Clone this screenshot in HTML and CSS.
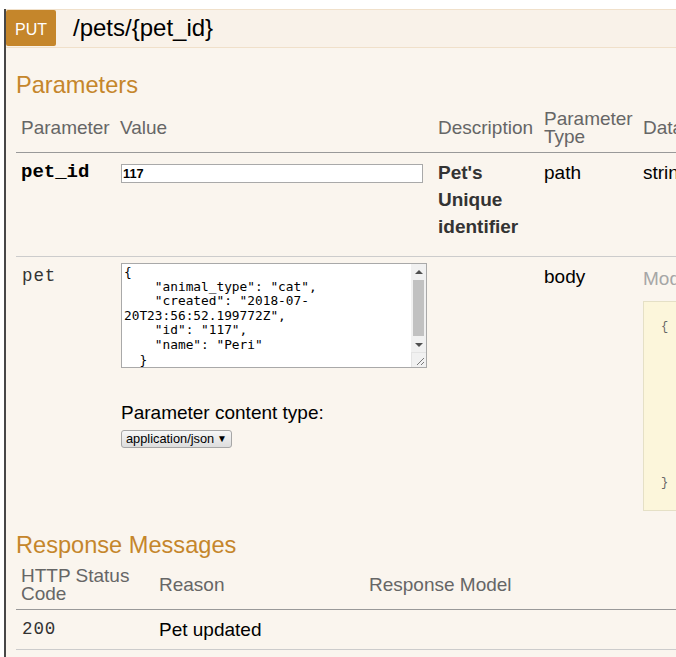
FILE: index.html
```html
<!DOCTYPE html>
<html lang="en">
<head>
<meta charset="utf-8">
<title>PUT /pets/{pet_id}</title>
<link rel="stylesheet" href="styles.css">
</head>
<body>
<div class="op">
  <div class="heading">
    <span class="method">PUT</span>
    <span class="path">/pets/{pet_id}</span>
  </div>
  <div class="content">
    <h4 class="section-title params-title">Parameters</h4>
    <table class="grid params">
      <colgroup>
        <col class="c-param">
        <col class="c-value">
        <col class="c-desc">
        <col class="c-ptype">
        <col class="c-dtype">
      </colgroup>
      <thead>
        <tr>
          <th>Parameter</th>
          <th class="th-value">Value</th>
          <th>Description</th>
          <th>Parameter Type</th>
          <th>Data Type</th>
        </tr>
      </thead>
      <tbody>
        <tr class="sep">
          <td class="code required">pet_id</td>
          <td><input class="text-input" type="text" value="117"></td>
          <td class="desc"><p><strong>Pet's Unique identifier</strong></p></td>
          <td>path</td>
          <td>string</td>
        </tr>
        <tr>
          <td class="code plain">pet</td>
          <td>
            <div class="textarea-wrap">
              <textarea class="body-textarea">{
    "animal_type": "cat",
    "created": "2018-07-20T23:56:52.199772Z",
    "id": "117",
    "name": "Peri"
  }</textarea>
              <div class="fake-scrollbar" aria-hidden="true">
                <div class="sb-button"><span class="arrow-up"></span></div>
                <div class="sb-track"><div class="sb-thumb"></div></div>
                <div class="sb-button"><span class="arrow-down"></span></div>
                <div class="sb-resizer">
                  <svg width="15" height="15" viewBox="0 0 15 15"><path d="M13 6 L6 13 M13 10 L10 13" stroke="#7a7a7a" stroke-width="1" fill="none"/></svg>
                </div>
              </div>
            </div>
            <div class="content-type">
              <label class="ct-label">Parameter content type:</label>
              <span class="select-wrap"><select class="ct-select"><option>application/json</option></select></span>
            </div>
          </td>
          <td></td>
          <td>body</td>
          <td>
            <div class="signature-nav"><span class="nav-link">Model</span> <span class="nav-link selected">Example Value</span></div>
            <pre class="snippet">{
      "animal_type": "string",
      "created": "2018-07-20T23:56:52.199Z",
      "id": "string",
      "name": "string",
      "tags": {
        "additionalProp1": "string",
        "additionalProp2": "string",
        "additionalProp3": "string"
      }
}</pre>
          </td>
        </tr>
      </tbody>
    </table>
    <h4 class="section-title resp-title">Response Messages</h4>
    <table class="grid responses">
      <colgroup>
        <col class="c-code">
        <col class="c-reason">
        <col class="c-model">
      </colgroup>
      <thead>
        <tr>
          <th>HTTP Status Code</th>
          <th>Reason</th>
          <th>Response Model</th>
        </tr>
      </thead>
      <tbody>
        <tr class="sep">
          <td class="code plain">200</td>
          <td>Pet updated</td>
          <td></td>
        </tr>
      </tbody>
    </table>
  </div>
</div>
</body>
</html>
```
FILE: styles.css
```css
* { box-sizing: border-box; }

html, body {
  margin: 0;
  padding: 0;
  background: #ffffff;
  overflow: hidden;
}

body {
  font-family: "Liberation Sans", Arial, sans-serif;
  width: 676px;
  height: 657px;
}

.op {
  margin: 9px 0 0 4px;
  border-left: 2px solid #474747;
  height: 648px;
  overflow: hidden;
  background: #faf5ee;
}

.heading {
  display: flex;
  align-items: flex-start;
  height: 39px;
  background: #f9f2e9;
  border-top: 1px solid #f0e0ca;
  border-bottom: 1px solid #f0e0ca;
}

.method {
  display: flex;
  align-items: center;
  justify-content: center;
  width: 50px;
  height: 36px;
  padding-top: 3px;
  background: #c5862b;
  color: #ffffff;
  font-size: 16px;
  border-radius: 2px;
}

.path {
  margin-left: 17px;
  font-size: 24px;
  line-height: 36px;
  color: #000000;
}

.content {
  padding: 0 0 0 10px;
}

.section-title {
  font-size: 23.6px;
  font-weight: normal;
  line-height: 27px;
  color: #c5862b;
}

.params-title { margin: 24px 0 6px; }
.resp-title { margin: 15px 0 3px; }

.grid {
  border-collapse: collapse;
  table-layout: fixed;
}

.params { width: 726px; }
.responses { width: 700px; }

.c-param { width: 100px; }
.c-value { width: 317px; }
.c-desc { width: 106px; }
.c-ptype { width: 99px; }
.c-dtype { width: 104px; }

.c-code { width: 138px; }
.c-reason { width: 210px; }
.c-model { width: 352px; }

.grid th {
  font-weight: normal;
  font-size: 19px;
  line-height: 18px;
  color: #666666;
  text-align: left;
  vertical-align: middle;
  padding: 5px 4px 6px 5px;
  border-bottom: 1px solid #999999;
}

.grid th.th-value {
  padding-left: 4px;
}

.grid td {
  font-size: 19px;
  line-height: 27px;
  color: #000000;
  vertical-align: top;
  padding: 6px 5px;
}

.grid tr.sep td {
  border-bottom: 1px solid #cccccc;
}

.code {
  font-family: "Liberation Mono", "Courier New", monospace;
}

.code.required {
  font-weight: bold;
  color: #000000;
}

.code.plain {
  font-size: 17.5px;
  letter-spacing: 0.9px;
  color: #333333;
  padding-left: 6px;
}

.desc p {
  margin: 0 0 10px;
  color: #333333;
}

.text-input {
  display: block;
  width: 302px;
  height: 19px;
  margin: 5px 0 0;
  padding: 0 1px;
  border: 1px solid #a9a9a9;
  background: #ffffff;
  font-family: "Liberation Sans", Arial, sans-serif;
  font-weight: bold;
  font-size: 12.8px;
  color: #000000;
}

.textarea-wrap {
  position: relative;
  width: 306px;
  height: 105px;
}

.body-textarea {
  display: block;
  width: 306px;
  height: 105px;
  margin: 0;
  padding: 1px 17px 2px 2px;
  border: 1px solid #a9a9a9;
  background: #ffffff;
  font-family: "DejaVu Sans Mono", monospace;
  font-size: 12.8px;
  line-height: 14.6px;
  color: #000000;
  overflow: hidden;
  resize: none;
}

.fake-scrollbar {
  position: absolute;
  top: 1px;
  right: 1px;
  width: 15px;
  height: 103px;
  display: flex;
  flex-direction: column;
  background: #f1f1f1;
}

.sb-button {
  height: 15px;
  display: flex;
  align-items: center;
  justify-content: center;
}

.arrow-up {
  width: 0;
  height: 0;
  border-left: 4px solid transparent;
  border-right: 4px solid transparent;
  border-bottom: 4px solid #505050;
}

.arrow-down {
  width: 0;
  height: 0;
  border-left: 4px solid transparent;
  border-right: 4px solid transparent;
  border-top: 4px solid #505050;
}

.sb-track {
  height: 58px;
  padding: 1px 2px 1px 2px;
}

.sb-thumb {
  height: 56px;
  background: #c1c1c1;
}

.sb-resizer {
  height: 15px;
  background: #f1f1f1;
  border-top: 1px solid #e4e4e4;
  border-left: 1px solid #e4e4e4;
}

.sb-resizer svg {
  display: block;
  margin: -1px 0 0 -1px;
}

.content-type {
  margin-top: 31px;
}

.ct-label {
  display: block;
  font-size: 19px;
  line-height: 27px;
  color: #000000;
}

.select-wrap {
  position: relative;
  display: block;
  width: 111px;
  margin-top: 4px;
}

.select-wrap::after {
  content: "\25BC";
  position: absolute;
  right: 5px;
  top: 3px;
  font-size: 10px;
  line-height: 11px;
  color: #000000;
  pointer-events: none;
}

.ct-select {
  display: block;
  -webkit-appearance: none;
  appearance: none;
  width: 111px;
  height: 18px;
  margin: 0;
  padding: 0 17px 0 4px;
  border: 1px solid #a6a6a6;
  border-radius: 3px;
  background: linear-gradient(#f7f7f7, #dddddd);
  font-family: "Liberation Sans", Arial, sans-serif;
  font-size: 12.8px;
  line-height: 16px;
  color: #000000;
}

.signature-nav {
  margin-top: 2px;
  white-space: nowrap;
}

.nav-link {
  color: #a6a6a6;
}

.nav-link.selected {
  color: #000000;
}

.snippet {
  margin: 9px 0 0;
  padding: 18px 10px 18px 17px;
  background: #fcf6db;
  border: 1px solid #e5e0c6;
  font-family: "Liberation Mono", monospace;
  font-size: 12px;
  line-height: 15.6px;
  color: #666666;
  white-space: pre;
  overflow: hidden;
}
```
